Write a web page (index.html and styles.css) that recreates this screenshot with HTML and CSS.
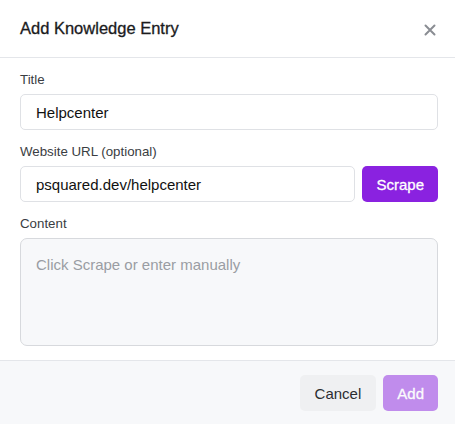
FILE: index.html
```html
<!DOCTYPE html>
<html>
<head>
<meta charset="utf-8">
<link rel="stylesheet" href="styles.css">
</head>
<body>
<div class="modal">
  <header class="modal-header">
    <h2 class="modal-title">Add Knowledge Entry</h2>
    <button class="close-btn" aria-label="Close">
      <svg width="12" height="12" viewBox="0 0 12 12"><path d="M1.5 1.5 L10.5 10.5 M10.5 1.5 L1.5 10.5" stroke="#8a8d93" stroke-width="2" stroke-linecap="round"/></svg>
    </button>
  </header>
  <div class="modal-body">
    <div class="field">
      <label class="label">Title</label>
      <input class="input" type="text" value="Helpcenter">
    </div>
    <div class="field">
      <label class="label">Website URL (optional)</label>
      <div class="url-row">
        <input class="input" type="text" value="psquared.dev/helpcenter">
        <button class="btn btn-primary">Scrape</button>
      </div>
    </div>
    <div class="field">
      <label class="label">Content</label>
      <textarea class="textarea" placeholder="Click Scrape or enter manually"></textarea>
    </div>
  </div>
  <footer class="modal-footer">
    <button class="btn btn-secondary">Cancel</button>
    <button class="btn btn-primary btn-disabled">Add</button>
  </footer>
</div>
</body>
</html>
```
FILE: styles.css
```css
* { box-sizing: border-box; }
html, body { margin: 0; padding: 0; background: #ffffff; }
body {
  font-family: "Liberation Sans", Arial, sans-serif;
  color: #1a1a1a;
  width: 455px;
  height: 424px;
  overflow: hidden;
}
.modal {
  display: flex;
  flex-direction: column;
  height: 424px;
  background: #fff;
}
.modal-header {
  height: 58px;
  border-bottom: 1px solid #e4e6ea;
  display: flex;
  align-items: center;
  justify-content: space-between;
  padding: 0 18px 0 20px;
}
.modal-title {
  margin: 0;
  font-size: 16.5px;
  font-weight: 500;
  color: #1b1b1d;
  -webkit-text-stroke: 0.3px #1b1b1d;
}
.close-btn {
  border: 0;
  background: transparent;
  padding: 0;
  width: 14px;
  height: 14px;
  display: flex;
  align-items: center;
  justify-content: center;
  margin-top: 2px;
}
.modal-body {
  padding: 12px 17px 14px 20px;
  display: flex;
  flex-direction: column;
  gap: 12px;
}
.field { display: flex; flex-direction: column; gap: 4px; }
.label {
  font-size: 13.3px;
  line-height: 20px;
  color: #3a3d42;
}
.input {
  height: 36px;
  border: 1px solid #dfe1e5;
  border-radius: 5px;
  padding: 0 15px;
  font-family: inherit;
  font-size: 15px;
  color: #111;
  width: 100%;
  outline: none;
  background: #fff;
}
.url-row { display: flex; gap: 7px; }
.url-row .input { flex: 1; }
.textarea {
  height: 108px;
  border: 1px solid #d7d9dd;
  border-radius: 7px;
  background: #f7f8fa;
  padding: 17px 15px;
  font-family: inherit;
  font-size: 15px;
  resize: none;
  width: 100%;
  outline: none;
}
.textarea::placeholder { color: #9a9da3; }
.btn {
  height: 36px;
  border: 0;
  border-radius: 5px;
  font-family: inherit;
  font-size: 15px;
  padding: 0 14px;
}
.btn-primary { background: #8a22e0; color: #fff; -webkit-text-stroke: 0.3px #fff; }
.btn-disabled { opacity: 0.5; }
.btn-secondary { background: #eff0f2; color: #2b2d31; padding: 0 15px; }
.modal-footer {
  flex: 1;
  border-top: 1px solid #e4e6ea;
  background: #f7f8fa;
  display: flex;
  justify-content: flex-end;
  align-items: flex-start;
  padding: 14px 17px 0 20px;
  gap: 7px;
}
```
